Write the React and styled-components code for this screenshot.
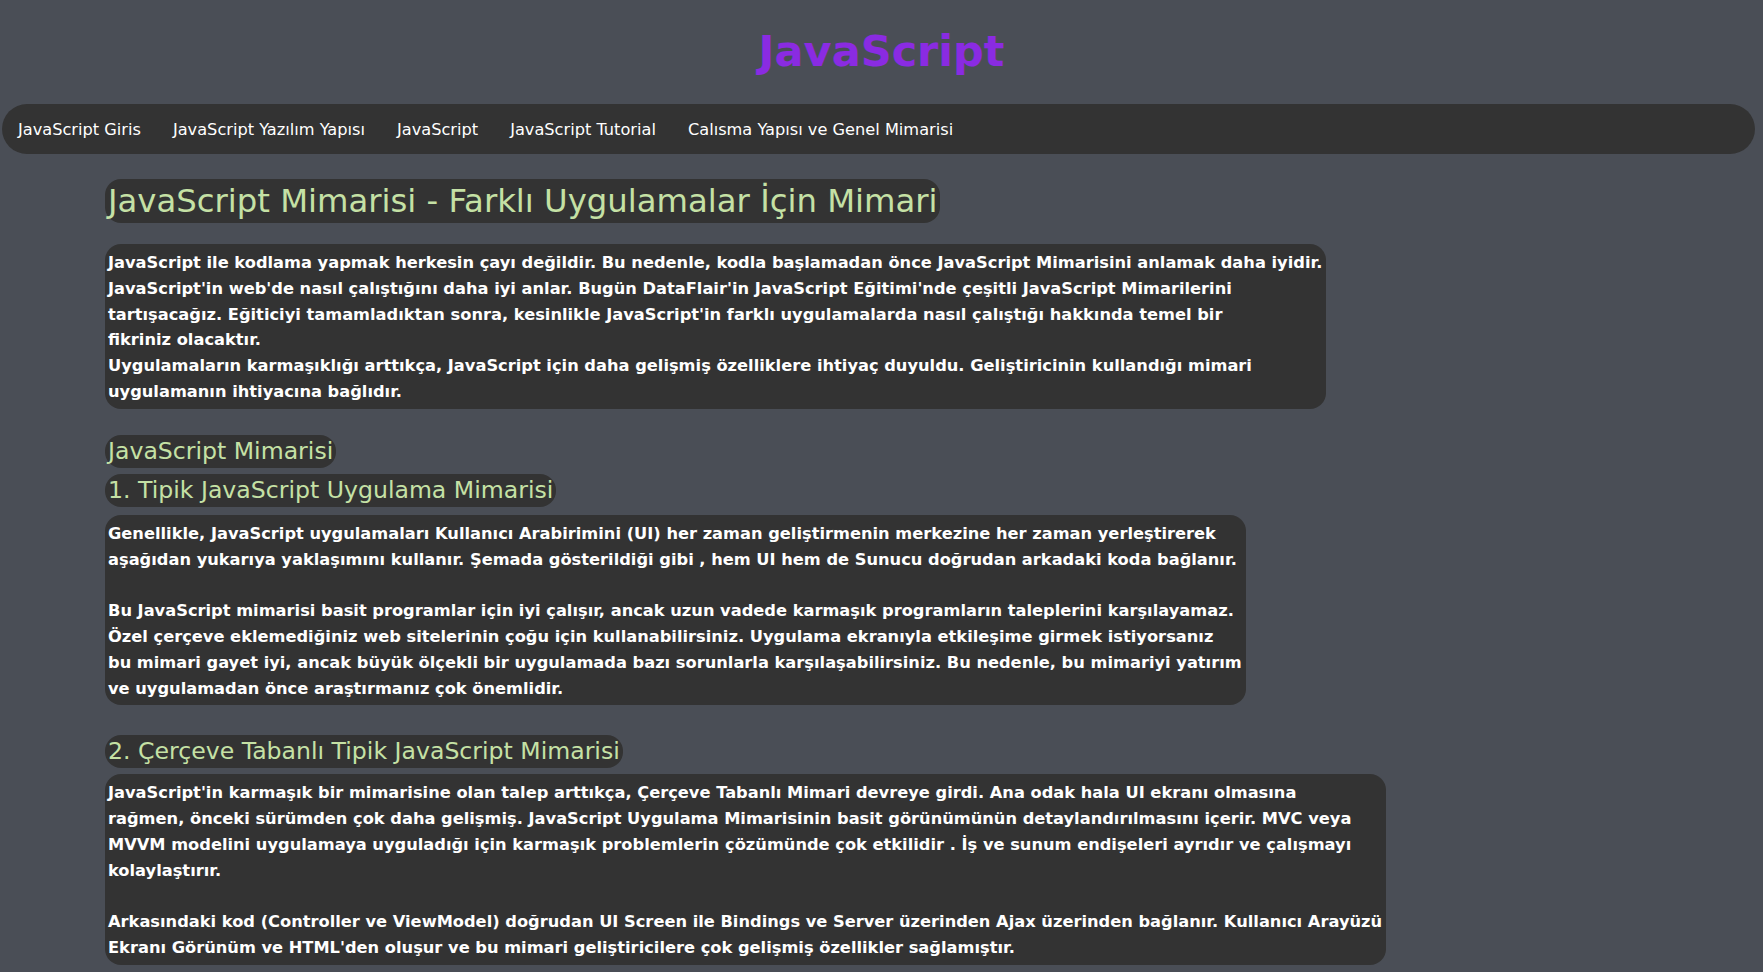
import React from 'react';
import styled, { createGlobalStyle } from 'styled-components';

const GlobalStyle = createGlobalStyle`
  html, body {
    margin: 0;
    padding: 0;
    background: #4a4e56;
  }

  body {
    font-family: "Comic Sans MS", "DejaVu Sans", sans-serif;
  }
`;

const Page = styled.div`
  min-height: 100vh;
  padding-bottom: 40px;
`;

const Title = styled.h1`
  margin: 0;
  padding: 24px 0 25px;
  text-align: center;
  font-size: 43px;
  line-height: 55px;
  font-weight: bold;
  color: #8a2be2;
`;

const NavBar = styled.nav`
  display: flex;
  align-items: center;
  height: 50px;
  margin: 0 8px 0 2px;
  border-radius: 25px;
  background: #333333;
`;

const NavLink = styled.a`
  padding: 0 16px;
  font-size: 16.2px;
  color: #ffffff;
  text-decoration: none;
  white-space: nowrap;
  cursor: pointer;
`;

const Content = styled.main`
  display: flex;
  flex-direction: column;
  align-items: flex-start;
  padding-left: 105px;
`;

const Heading = styled.h2`
  margin: ${(p) => p.$top}px 0 0;
  padding: 0 3px 0 3px;
  font-size: ${(p) => (p.$big ? 32.3 : 23.6)}px;
  line-height: ${(p) => (p.$big ? 44 : 33)}px;
  font-weight: normal;
  color: #c5e1a5;
  background: #333333;
  border-radius: 16px;
  white-space: nowrap;
`;

const Paragraph = styled.p`
  margin: ${(p) => p.$top}px 0 0;
  padding: 6px 4px 4px 3px;
  font-size: 16.25px;
  line-height: 25.8px;
  font-weight: bold;
  color: #ffffff;
  background: #333333;
  border-radius: 16px;
  white-space: nowrap;
`;

const navItems = [
  'JavaScript Giris',
  'JavaScript Yazılım Yapısı',
  'JavaScript',
  'JavaScript Tutorial',
  'Calısma Yapısı ve Genel Mimarisi',
];

export default function App() {
  return (
    <Page>
      <GlobalStyle />
      <Title>JavaScript</Title>
      <NavBar>
        {navItems.map((item) => (
          <NavLink key={item}>{item}</NavLink>
        ))}
      </NavBar>
      <Content>
        <Heading $big $top={25}>
          JavaScript Mimarisi - Farklı Uygulamalar İçin Mimari
        </Heading>
        <Paragraph $top={21}>
          JavaScript ile kodlama yapmak herkesin çayı değildir. Bu nedenle, kodla başlamadan önce JavaScript Mimarisini anlamak daha iyidir.
          <br />
          JavaScript'in web'de nasıl çalıştığını daha iyi anlar. Bugün DataFlair'in JavaScript Eğitimi'nde çeşitli JavaScript Mimarilerini
          <br />
          tartışacağız. Eğiticiyi tamamladıktan sonra, kesinlikle JavaScript'in farklı uygulamalarda nasıl çalıştığı hakkında temel bir
          <br />
          fikriniz olacaktır.
          <br />
          Uygulamaların karmaşıklığı arttıkça, JavaScript için daha gelişmiş özelliklere ihtiyaç duyuldu. Geliştiricinin kullandığı mimari
          <br />
          uygulamanın ihtiyacına bağlıdır.
        </Paragraph>

        <Heading $top={26}>JavaScript Mimarisi</Heading>
        <Heading $top={6}>1. Tipik JavaScript Uygulama Mimarisi</Heading>
        <Paragraph $top={8}>
          Genellikle, JavaScript uygulamaları Kullanıcı Arabirimini (UI) her zaman geliştirmenin merkezine her zaman yerleştirerek
          <br />
          aşağıdan yukarıya yaklaşımını kullanır. Şemada gösterildiği gibi , hem UI hem de Sunucu doğrudan arkadaki koda bağlanır.
          <br />
          <br />
          Bu JavaScript mimarisi basit programlar için iyi çalışır, ancak uzun vadede karmaşık programların taleplerini karşılayamaz.
          <br />
          Özel çerçeve eklemediğiniz web sitelerinin çoğu için kullanabilirsiniz. Uygulama ekranıyla etkileşime girmek istiyorsanız
          <br />
          bu mimari gayet iyi, ancak büyük ölçekli bir uygulamada bazı sorunlarla karşılaşabilirsiniz. Bu nedenle, bu mimariyi yatırım
          <br />
          ve uygulamadan önce araştırmanız çok önemlidir.
        </Paragraph>

        <Heading $top={30}>2. Çerçeve Tabanlı Tipik JavaScript Mimarisi</Heading>
        <Paragraph $top={6}>
          JavaScript'in karmaşık bir mimarisine olan talep arttıkça, Çerçeve Tabanlı Mimari devreye girdi. Ana odak hala UI ekranı olmasına
          <br />
          rağmen, önceki sürümden çok daha gelişmiş. JavaScript Uygulama Mimarisinin basit görünümünün detaylandırılmasını içerir. MVC veya
          <br />
          MVVM modelini uygulamaya uyguladığı için karmaşık problemlerin çözümünde çok etkilidir . İş ve sunum endişeleri ayrıdır ve çalışmayı
          <br />
          kolaylaştırır.
          <br />
          <br />
          Arkasındaki kod (Controller ve ViewModel) doğrudan UI Screen ile Bindings ve Server üzerinden Ajax üzerinden bağlanır. Kullanıcı Arayüzü
          <br />
          Ekranı Görünüm ve HTML'den oluşur ve bu mimari geliştiricilere çok gelişmiş özellikler sağlamıştır.
        </Paragraph>
      </Content>
    </Page>
  );
}
